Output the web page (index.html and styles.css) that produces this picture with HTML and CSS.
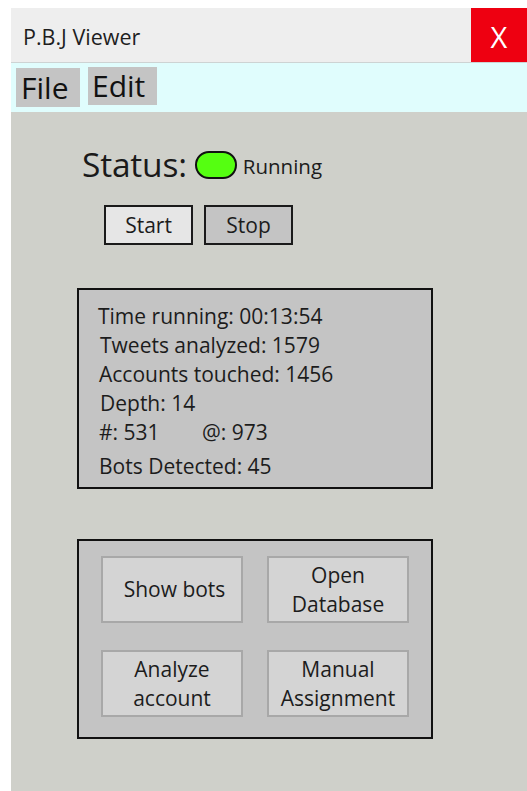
FILE: index.html
```html
<!DOCTYPE html>
<html lang="en">
<head>
<meta charset="utf-8">
<title>P.B.J Viewer</title>
<link rel="stylesheet" href="styles.css">
</head>
<body>
<div class="window">
  <header class="titlebar">
    <span class="titlebar__title">P.B.J Viewer</span>
    <button class="titlebar__close" type="button">X</button>
  </header>

  <nav class="menubar">
    <span class="menubar__item menubar__item--file">File</span>
    <span class="menubar__item menubar__item--edit">Edit</span>
  </nav>

  <main class="content">
    <div class="status">
      <span class="status__label">Status:</span>
      <span class="status__light"></span>
      <span class="status__text">Running</span>
    </div>

    <div class="controls">
      <button class="control control--start" type="button">Start</button>
      <button class="control control--stop" type="button">Stop</button>
    </div>

    <section class="stats">
      <div class="stats__line">Time running: 00:13:54</div>
      <div class="stats__line stats__line--in3">Tweets analyzed: 1579</div>
      <div class="stats__line stats__line--in1">Accounts touched: 1456</div>
      <div class="stats__line stats__line--in3">Depth: 14</div>
      <div class="stats__line stats__line--in1"><span class="stats__pair">#: 531</span>@: 973</div>
      <div class="stats__line stats__line--in1 stats__line--gap">Bots Detected: 45</div>
    </section>

    <section class="actions">
      <button class="action action--nudge" type="button">Show bots</button>
      <button class="action" type="button">Open<br>Database</button>
      <button class="action" type="button">Analyze<br>account</button>
      <button class="action" type="button">Manual<br>Assignment</button>
    </section>
  </main>
</div>
</body>
</html>
```

FILE: styles.css
```css
* {
  box-sizing: border-box;
}

html,
body {
  margin: 0;
  padding: 0;
  background: #ffffff;
  overflow: hidden;
}

body {
  font-family: "Open Sans", "Noto Sans", sans-serif;
  color: #1c1c1c;
}

button {
  font-family: inherit;
  color: inherit;
  margin: 0;
  padding: 0;
  cursor: pointer;
}

.window {
  margin: 8px 0 0 11px;
  height: 783px;
  display: flex;
  flex-direction: column;
  background: #cfd0ca;
}

/* title bar */
.titlebar {
  height: 55px;
  flex: none;
  display: flex;
  align-items: stretch;
  background: #eeeeee;
  border-bottom: 1px solid #cdd3d3;
}

.titlebar__title {
  flex: 1;
  display: flex;
  align-items: center;
  padding: 3px 0 0 12px;
  font-size: 21.5px;
  color: #1e1e1e;
}

.titlebar__close {
  width: 56px;
  border: none;
  background: #ee0011;
  color: #ffffff;
  font-size: 29px;
  line-height: 1;
  padding-top: 2px;
}

/* menu bar */
.menubar {
  height: 49px;
  flex: none;
  display: flex;
  align-items: flex-start;
  gap: 8px;
  padding-left: 5px;
  background: #e0fdfd;
}

.menubar__item {
  background: #c4c4c4;
  font-size: 30px;
  line-height: 38px;
  height: 38px;
  color: #111111;
}

.menubar__item--file {
  margin-top: 5px;
  width: 64px;
  padding-left: 5px;
  height: 39px;
  line-height: 40px;
}

.menubar__item--edit {
  margin-top: 4px;
  width: 69px;
  padding-left: 4px;
}

/* main area */
.content {
  flex: 1;
  display: flex;
  flex-direction: column;
  padding-left: 66px;
}

.status {
  margin: 32px 0 0 5px;
  height: 40px;
  display: flex;
  align-items: center;
}

.status__label {
  font-size: 33.5px;
  line-height: 40px;
  letter-spacing: -0.2px;
  color: #1a1a1a;
}

.status__light {
  width: 42px;
  height: 28px;
  margin: 2px 6px 0 8px;
  border: 2px solid #111111;
  border-radius: 14px;
  background: #55ff11;
}

.status__text {
  font-size: 20.5px;
  line-height: 28px;
  padding-top: 3px;
}

.controls {
  margin: 21px 0 0 27px;
  display: flex;
  gap: 11px;
}

.control {
  width: 89px;
  height: 40px;
  border: 2px solid #1a1a1a;
  font-size: 21px;
  line-height: 29px;
}

.control--start {
  background: #e6e6e6;
}

.control--stop {
  background: #c4c4c4;
}

/* statistics panel */
.stats {
  margin-top: 43px;
  width: 356px;
  height: 201px;
  border: 2px solid #111111;
  background: #c4c4c4;
  padding: 12px 0 0 19px;
  font-size: 21px;
  line-height: 29px;
  color: #1c1c1c;
}

.stats__line {
  white-space: nowrap;
}

.stats__line--in1 {
  padding-left: 1px;
}

.stats__line--in3 {
  padding-left: 2px;
}

.stats__line--gap {
  margin-top: 5px;
}

.stats__pair {
  display: inline-block;
  width: 103px;
}

/* action buttons */
.actions {
  margin-top: 50px;
  width: 356px;
  height: 200px;
  border: 2px solid #111111;
  background: #c4c4c4;
  padding: 15px 0 0 22px;
  display: grid;
  grid-template-columns: 142px 142px;
  grid-template-rows: 67px 67px;
  column-gap: 24px;
  row-gap: 27px;
  align-content: start;
}

.action {
  border: 2px solid #a8a8a8;
  background: #d4d4d4;
  font-size: 21px;
  line-height: 29px;
  text-align: center;
  color: #1c1c1c;
}

.action--nudge {
  padding-left: 5px;
}
```
